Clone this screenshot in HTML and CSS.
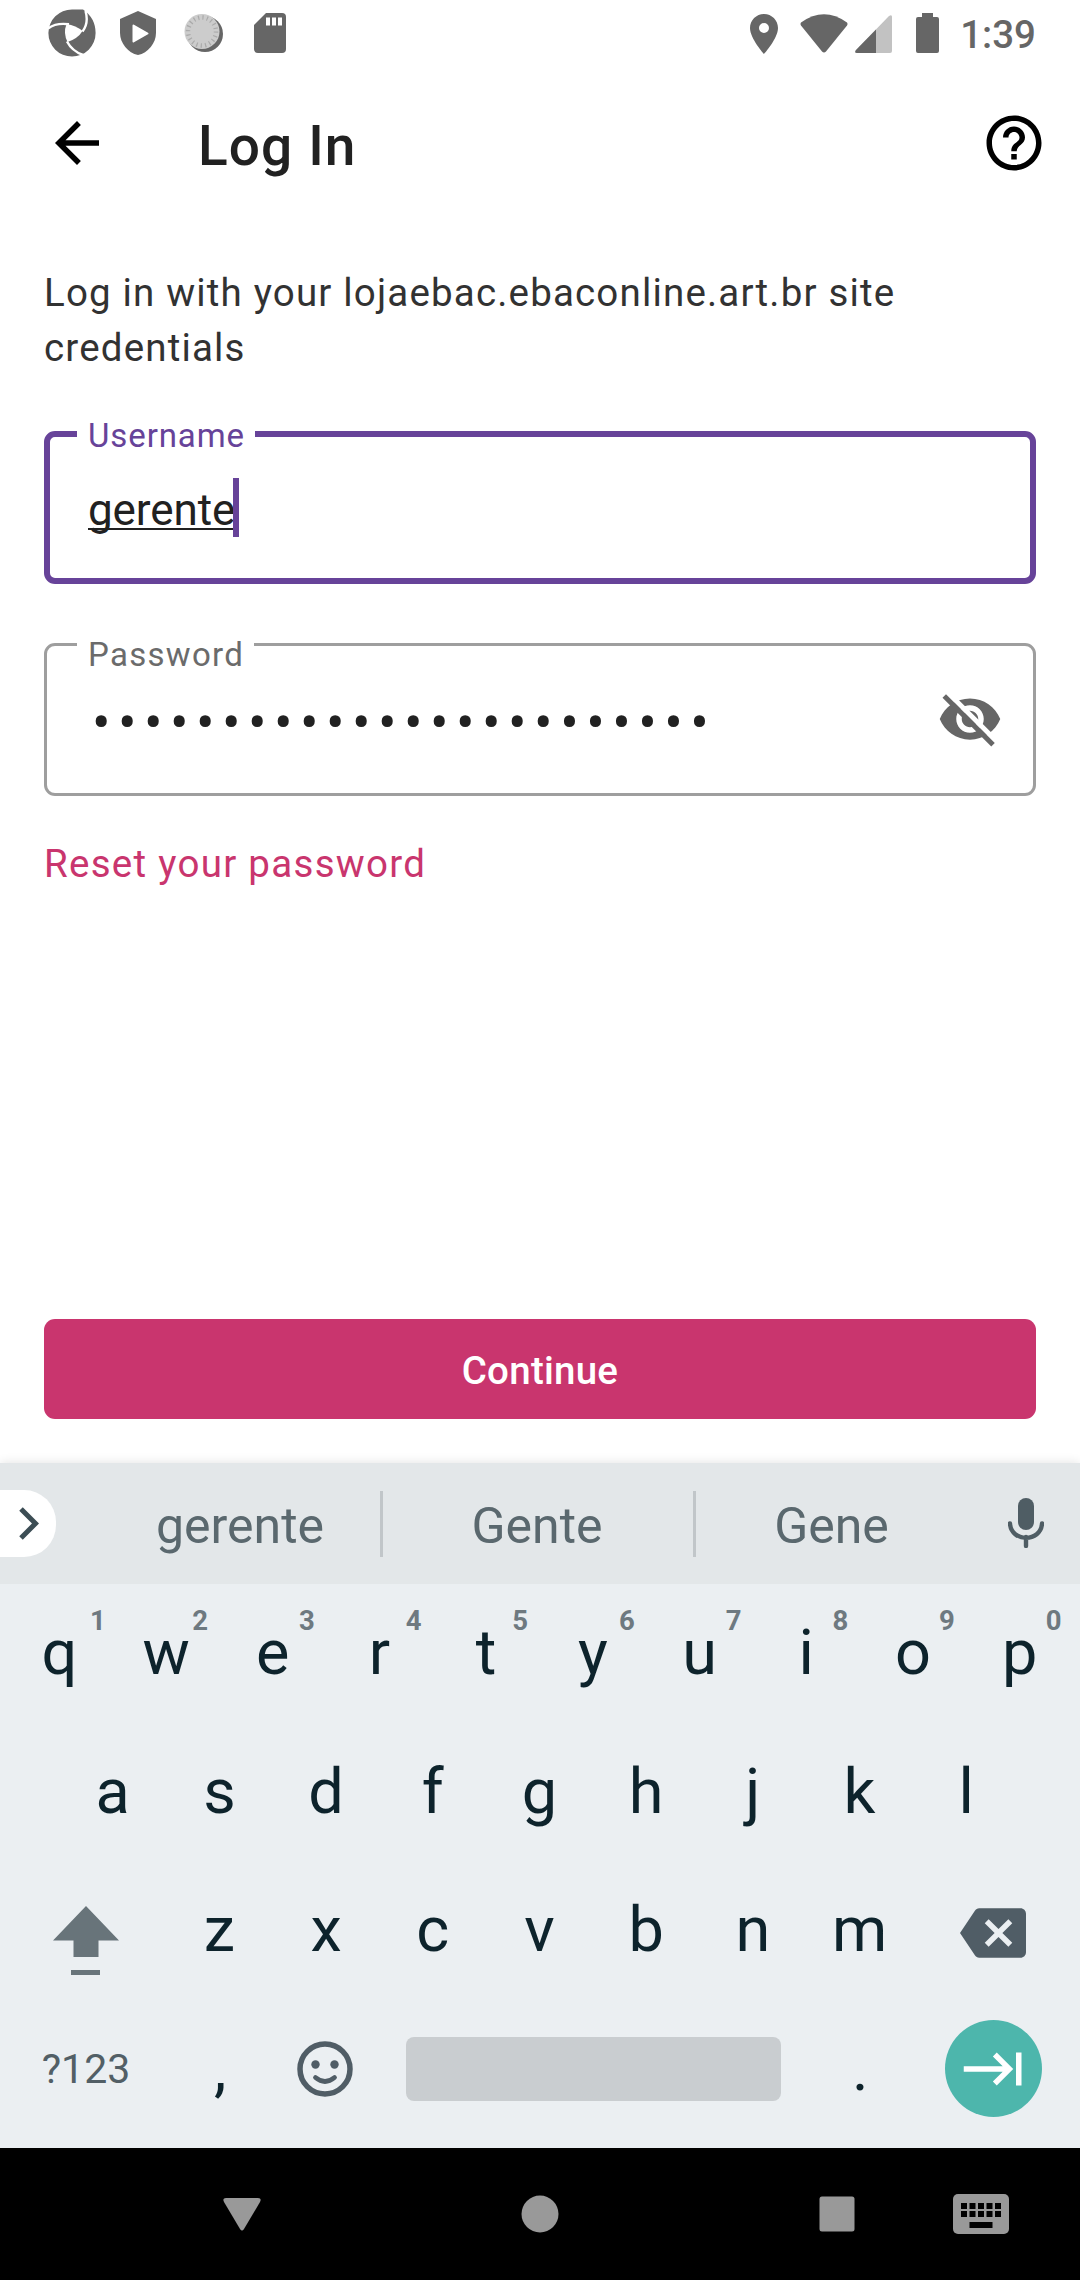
FILE: index.html
```html
<!DOCTYPE html>
<html lang="en">
<head>
<meta charset="utf-8">
<title>Log In</title>
<link rel="stylesheet" href="styles.css">
</head>
<body>
<div class="screen">
  <header class="status">
    <div class="status-left">
      <svg class="st-swirl" viewBox="0 0 48 48"><path d="M24 .4H35Q47.600 9 47.600 24A23.600 23.600 0 1 1 24 .4Z" fill="#666"/><path d="M18.500 15Q28 16.500 34.500 22Q30 29.500 19.500 33Q15 24 18.500 15Z" fill="#fff"/><path d="M0 19.500Q8 13.500 21 15.300M37.500 2Q41 14 34.500 22.500M19 32.500Q24 42 35 46" fill="none" stroke="#fff" stroke-width="2.400"/></svg>
      <svg class="st-shield" viewBox="0 0 36 44"><path d="M18 0L36 8V22C36 32 28 42 18 44C8 42 0 32 0 22V8Z" fill="#666"/><path d="M13.500 14.500L27.500 22.500L13.500 30.500Z" fill="#fff" stroke="#fff" stroke-width="2" stroke-linejoin="round"/></svg>
      <svg class="st-dial" viewBox="0 0 40 40"><circle cx="21" cy="21" r="18" fill="#666"/><circle cx="18" cy="18.500" r="17.500" fill="#ccc"/><circle cx="18" cy="18.500" r="14" fill="none" stroke="#aaa" stroke-width="4.500" stroke-dasharray="1.200 3.198"/></svg>
      <svg class="st-sd" viewBox="0 0 32 40"><path d="M12 0H28Q32 0 32 4V36Q32 40 28 40H4Q0 40 0 36V12Z" fill="#666"/><path d="M12 4.500h4v8h-4zM18 4.500h4v8h-4zM24 4.500h4v8h-4z" fill="#fff"/></svg>
    </div>
    <div class="status-right">
      <svg class="st-pin" viewBox="5 2 14 20"><path d="M12 2C8.130 2 5 5.130 5 9c0 5.250 7 13 7 13s7-7.750 7-13c0-3.870-3.130-7-7-7zm0 9.500a2.500 2.500 0 1 1 0-5 2.500 2.500 0 0 1 0 5z" fill="#666"/></svg>
      <svg class="st-wifi" viewBox="0 0 48 39"><path d="M1 8.500Q24-8 47 8.500Q48 10 47 11.500L26 37.500Q24 39.500 22 37.500L1 11.500Q0 10 1 8.500Z" fill="#666"/></svg>
      <svg class="st-signal" viewBox="0 0 37 38"><path d="M1 35L34 1Q37-1 37 2V36Q37 38 35 38H2Q-1 38 1 35Z" fill="#c2c2c2"/><path d="M1 35L21 14.400V38H2Q-1 38 1 35Z" fill="#666"/></svg>
      <svg class="st-batt" viewBox="0 0 23 40"><path d="M6 0H17V4H21Q23 4 23 6V38Q23 40 21 40H2Q0 40 0 38V6Q0 4 2 4H6Z" fill="#666"/></svg>
      <span class="clock">1:39</span>
    </div>
  </header>
  <div class="toolbar">
    <svg class="icon" viewBox="0 0 24 24"><path d="M20 11H7.830l5.590-5.590L12 4l-8 8 8 8 1.410-1.410L7.830 13H20v-2z"/></svg>
    <h1 class="title">Log In</h1>
    <svg class="icon" viewBox="0 0 24 24"><path d="M11 18h2v-2h-2v2zm1-16C6.480 2 2 6.480 2 12s4.480 10 10 10 10-4.480 10-10S17.520 2 12 2zm0 18c-4.410 0-8-3.590-8-8s3.590-8 8-8 8 3.590 8 8-3.590 8-8 8zm0-14c-2.210 0-4 1.790-4 4h2c0-1.100.9-2 2-2s2 .9 2 2c0 2-3 1.750-3 5h2c0-2.250 3-2.500 3-5 0-2.210-1.790-4-4-4z"/></svg>
  </div>
  <main class="form">
    <p class="lead">Log in with your lojaebac.ebaconline.art.br site credentials</p>
    <div class="field focused">
      <span class="label">Username</span>
      <span class="value">gerente</span><i class="caret"></i>
    </div>
    <div class="field">
      <span class="label">Password</span>
      <span class="dots">••••••••••••••••••••••••</span>
      <svg class="eye" viewBox="0 0 24 24"><path d="M12 4.500C7 4.500 2.730 7.610 1 12c1.730 4.390 6 7.500 11 7.500s9.270-3.110 11-7.500c-1.730-4.390-6-7.500-11-7.500zM12 17c-2.760 0-5-2.240-5-5s2.240-5 5-5 5 2.240 5 5-2.240 5-5 5zM12 9c-1.660 0-3 1.340-3 3s1.340 3 3 3 3-1.340 3-3-1.340-3-3-3z" fill="#666"/><path d="M4.540 1.730L22.270 19.460 21 20.730 3.270 3Z" fill="#fff"/><path d="M3.270 3L21 20.730 19.730 22 2 4.270Z" fill="#666"/></svg>
    </div>
    <a class="reset">Reset your password</a>
    <button class="continue">Continue</button>
  </main>
  <section class="keyboard">
    <div class="suggest">
      <div class="expand"><svg viewBox="0 0 20 33"><path d="M2 2L16.500 16.500L2 31" fill="none" stroke="#3c4d54" stroke-width="5"/></svg></div>
      <span class="word first">gerente</span>
      <span class="word">Gente</span>
      <span class="word last">Gene</span>
      <svg class="mic" viewBox="0 0 36 50"><rect x="10" y="0" width="16" height="32" rx="8" fill="#4f5d64"/><path d="M2 25.500C3 44.500 33 44.500 34 25.500M18 39V48" fill="none" stroke="#4f5d64" stroke-width="4.400" stroke-linecap="round"/></svg>
    </div>
    <div class="row">
      <span class="key">q<sup class="one">1</sup></span><span class="key">w<sup>2</sup></span><span class="key">e<sup>3</sup></span><span class="key">r<sup>4</sup></span><span class="key">t<sup>5</sup></span><span class="key">y<sup>6</sup></span><span class="key">u<sup>7</sup></span><span class="key">i<sup>8</sup></span><span class="key">o<sup>9</sup></span><span class="key">p<sup>0</sup></span>
    </div>
    <div class="row">
      <span class="key">a</span><span class="key">s</span><span class="key">d</span><span class="key">f</span><span class="key">g</span><span class="key">h</span><span class="key">j</span><span class="key">k</span><span class="key">l</span>
    </div>
    <div class="row">
      <span class="key wide"><svg class="shift" viewBox="0 0 66 70"><path d="M33 0L66 34.500H45.500V51H20.500V34.500H0ZM18 64H47V69H18Z" fill="#68747a"/></svg></span>
      <span class="key">z</span><span class="key">x</span><span class="key">c</span><span class="key">v</span><span class="key">b</span><span class="key">n</span><span class="key">m</span>
      <span class="key wide"><svg class="del" viewBox="0 0 24 24"><path d="M22 3H7c-.69 0-1.230.35-1.590.88L0 12l5.410 8.110c.36.53.9.890 1.590.890h15c1.100 0 2-.9 2-2V5c0-1.100-.9-2-2-2zm-3 12.590L17.590 17 14 13.410 10.410 17 9 15.590 12.590 12 9 8.410 10.410 7 14 10.590 17.590 7 19 8.410 15.410 12 19 15.590z" fill="#505d66"/></svg></span>
    </div>
    <div class="row">
      <span class="key wide symbols">?123</span>
      <span class="key comma">,</span>
      <span class="key"><svg class="emoji" viewBox="0 0 56 56"><circle cx="28" cy="28" r="25" fill="none" stroke="#505d66" stroke-width="5.500"/><circle cx="18.500" cy="23.500" r="4.200" fill="#505d66"/><circle cx="37.500" cy="23.500" r="4.200" fill="#505d66"/><path d="M18.500 36.500Q28 44.500 37.500 36.500" fill="none" stroke="#505d66" stroke-width="4.800" stroke-linecap="round"/></svg></span>
      <span class="space"></span>
      <span class="key">.</span>
      <span class="key wide"><span class="enter"><svg class="tab" viewBox="0 0 24 24"><path d="M11.590 7.410L15.170 11H1v2h14.170l-3.590 3.590L13 18l6-6-6-6-1.410 1.410zM20 6v12h2V6h-2z" fill="#fff"/></svg></span></span>
    </div>
  </section>
  <nav class="nav">
    <svg class="n-back" viewBox="0 0 38 33"><path d="M3 0H35Q39 0 37 4L21 31Q19 34 17 31L1 4Q-1 0 3 0Z" fill="#999"/></svg>
    <svg class="n-home" viewBox="0 0 38 38"><circle cx="19" cy="19" r="18.500" fill="#999"/></svg>
    <svg class="n-recent" viewBox="0 0 36 36"><rect x=".5" y=".5" width="35" height="35" rx="2.500" fill="#999"/></svg>
    <svg class="n-kbd" viewBox="0 0 56 40"><rect width="56" height="40" rx="5" fill="#999"/><path d="M8 9h6v6H8zM16.500 9h6v6h-6zM25 9h6v6h-6zM33.500 9h6v6h-6zM42 9h6v6h-6zM8 17h6v6H8zM16.500 17h6v6h-6zM25 17h6v6h-6zM33.500 17h6v6h-6zM42 17h6v6h-6zM16.500 28h23v6h-23z"/></svg>
  </nav>
</div>
</body>
</html>
```
FILE: styles.css
```css
* { box-sizing: border-box; }
body { margin: 0; font-family: Roboto, "Noto Sans", sans-serif; }
svg { display: block; flex: none; }
.screen { width: 1080px; height: 2280px; display: flex; flex-direction: column; background: #fff; overflow: hidden; }

.status { height: 66px; display: flex; justify-content: space-between; padding: 0 44px 0 48px; }
.status-left, .status-right { display: flex; align-items: center; }
.st-swirl { width: 48px; height: 48px; }
.st-shield { width: 36px; height: 44px; margin-left: 24px; }
.st-dial { width: 40px; height: 40px; margin-left: 28px; }
.st-sd { width: 32px; height: 40px; margin-left: 30px; }
.st-pin { width: 28px; height: 40px; margin-top: 2px; }
.st-wifi { width: 48px; height: 39px; margin-left: 22px; }
.st-signal { width: 37px; height: 38px; margin: 2px 0 0 7px; }
.st-batt { width: 23px; height: 40px; margin-left: 24px; }
.clock { margin-left: 21px; padding-top: 3px; font-size: 38.5px; line-height: 66px; font-weight: 500; color: #666; }

.toolbar { height: 154px; display: flex; align-items: center; padding: 0 33px 0 44px; }
.icon { width: 66px; height: 66px; }
.title { flex: 1; margin: 6px 0 0 88px; font-size: 55px; line-height: 66px; font-weight: 500; color: #212121; letter-spacing: 1.1px; }

.form { height: 1243px; padding: 45px 44px 44px; display: flex; flex-direction: column; align-items: stretch; }
.lead { margin: 0; font-size: 38.5px; line-height: 55px; letter-spacing: 1.17px; color: #323232; }
.field { position: relative; height: 153px; flex: none; margin-top: 59px; border: 3px solid #9e9e9e; border-radius: 11px; padding: 0 30px 0 41px; display: flex; align-items: center; }
.field.focused { margin-top: 56px; border: 6px solid #674399; padding-left: 38px; }
.label { position: absolute; left: 30px; top: -11px; padding: 0 10px 0 11px; background: #fff; font-size: 33px; line-height: 40px; letter-spacing: 1.3px; color: #6b6b6b; }
.focused .label { left: 27px; top: -21px; letter-spacing: .9px; color: #674399; }
.value { font-size: 44px; line-height: 59px; padding-top: 5px; letter-spacing: -.1px; color: #212121; text-decoration: underline; text-decoration-thickness: 2px; text-underline-offset: 3px; text-decoration-skip-ink: none; }
.caret { width: 6px; height: 59px; margin-left: -2px; background: #674399; }
.dots { flex: 1; padding: 7px 0 0 4px; font-size: 55px; line-height: 59px; letter-spacing: 7.45px; color: #212121; white-space: nowrap; }
.eye { width: 66px; height: 66px; margin-bottom: 1px; }
.reset { margin-top: 40px; font-size: 38.5px; line-height: 55px; letter-spacing: 1.28px; color: #c9356e; }
.continue { margin-top: auto; height: 100px; border: 0; border-radius: 11px; background: #c9356e; color: #fff; font: 500 38.500px/100px Roboto, sans-serif; letter-spacing: .25px; padding: 2px 0 0; }

.keyboard { height: 685px; background: #ebeff2; box-shadow: 0 0 10px rgba(0, 0, 0, .12); }
.suggest { height: 121px; background: #e3e7e9; display: flex; align-items: center; padding-right: 36px; }
.expand { width: 56px; height: 67px; border-radius: 0 32px 32px 0; background: #fff; display: flex; align-items: center; padding-left: 19px; }
.expand svg { width: 20px; height: 33px; }
.word { width: 313px; height: 66px; padding-top: 4px; padding-right: 2px; border-right: 3px solid #c1c6c9; font-size: 50px; line-height: 62px; color: #5a686e; text-align: center; }
.first { width: 327px; padding-left: 46px; }
.last { width: 312px; padding-right: 41px; border: 0; }
.mic { width: 36px; height: 50px; margin-bottom: 2px; }
.row { height: 138.600px; display: flex; justify-content: center; padding: 0 6.5px 0 5.5px; }
.key { position: relative; width: 106.7px; display: flex; align-items: center; justify-content: center; font-size: 63px; line-height: 138px; color: #0d232c; }
.key sup { position: absolute; left: 79.5px; top: 21px; font-size: 27.5px; line-height: 32px; font-weight: 700; color: #6e7980; }
.key .one { left: 84px; }
.wide { width: 160.2px; }
.symbols { font-size: 41px; padding-left: 1px; color: #525f66; }
.comma { padding-left: 3px; }
.shift { width: 66px; height: 70px; margin-top: 22px; }
.del { width: 66px; height: 66px; margin-top: 6px; }
.emoji { width: 56px; height: 56px; margin-bottom: 1px; }
.space { width: 376px; height: 64px; margin: 37px 26px 0 27px; border-radius: 8px; background: #c9cdd0; }
.enter { width: 97px; height: 97px; margin-bottom: 1px; border-radius: 50%; background: #4db6ac; display: flex; align-items: center; justify-content: center; }
.tab { width: 66px; height: 66px; }

.nav { height: 132px; background: #000; display: flex; align-items: center; padding-left: 223px; }
.n-back { width: 38px; height: 33px; }
.n-home { width: 38px; height: 38px; margin-left: 260px; }
.n-recent { width: 36px; height: 36px; margin-left: 260px; }
.n-kbd { width: 56px; height: 40px; margin-left: 98px; }
```
